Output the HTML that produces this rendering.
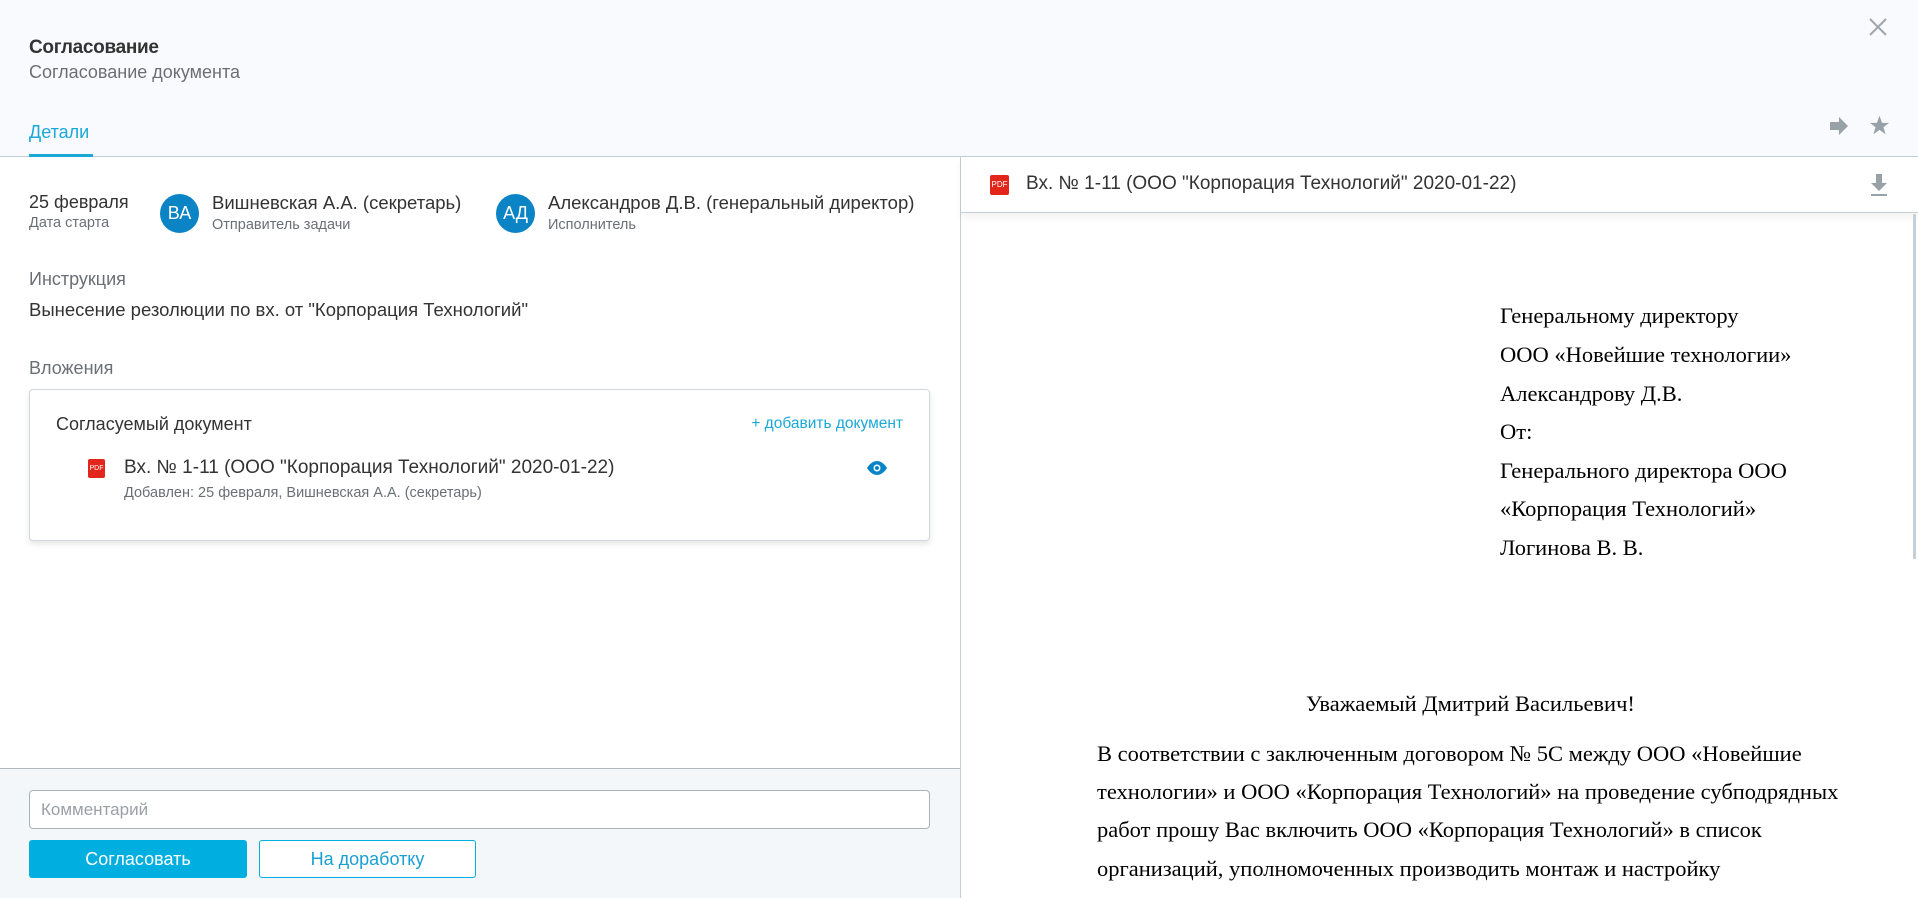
<!DOCTYPE html>
<html><head><meta charset="utf-8"><style>
*{margin:0;padding:0;box-sizing:border-box}
body{width:1918px;height:898px;position:relative;overflow:hidden;background:#fff;font-family:"Liberation Sans","DejaVu Sans",sans-serif;color:#333}
.a{position:absolute;white-space:nowrap}
.s{font-family:"Liberation Serif",serif;color:#000;font-size:22.5px}
</style></head><body>
<div class="a" style="left:0;top:0;width:1918px;height:157px;background:#f9fafd;border-bottom:1px solid #c6ced6"></div>
<div class="a" style="left:29px;top:37px;font-size:19px;font-weight:bold;color:#333;letter-spacing:-.3px">Согласование</div>
<div class="a" style="left:29px;top:62px;font-size:18px;color:#6b6f75">Согласование документа</div>
<div class="a" style="left:29px;top:122px;font-size:18px;color:#1aa8d8">Детали</div>
<div class="a" style="left:29px;top:154px;width:64px;height:3px;background:#1aa8d8"></div>
<svg class="a" style="left:1868px;top:17px" width="20" height="20" viewBox="0 0 20 20"><path d="M2 2L18 18M18 2L2 18" stroke="#a0a6ad" stroke-width="2"/></svg>
<svg class="a" style="left:1829px;top:116px" width="20" height="20" viewBox="0 0 20 20"><path d="M1 6h9V1l9 9-9 9v-5H1z" fill="#98a0a8"/></svg>
<svg class="a" style="left:1869px;top:115px" width="21" height="21" viewBox="0 0 24 24"><path d="M12 1l3 8h8l-6.5 5 2.5 8-7-5-7 5 2.5-8L1 9h8z" fill="#98a0a8"/></svg>
<div class="a" style="left:960px;top:157px;width:1px;height:741px;background:#c6ced6"></div>
<div class="a" style="left:29px;top:192px;font-size:18px">25 февраля</div>
<div class="a" style="left:29px;top:215px;font-size:14.5px;color:#6b6f75">Дата старта</div>
<div class="a" style="left:160px;top:194px;width:39px;height:39px;border-radius:50%;background:#0b84c6;color:#fff;font-size:18px;line-height:39px;text-align:center">ВА</div>
<div class="a" style="left:212px;top:192px;font-size:18.5px">Вишневская А.А. (секретарь)</div>
<div class="a" style="left:212px;top:217px;font-size:14.5px;color:#6b6f75">Отправитель задачи</div>
<div class="a" style="left:496px;top:194px;width:39px;height:39px;border-radius:50%;background:#0b84c6;color:#fff;font-size:18px;line-height:39px;text-align:center">АД</div>
<div class="a" style="left:548px;top:192px;font-size:18.5px">Александров Д.В. (генеральный директор)</div>
<div class="a" style="left:548px;top:217px;font-size:14.5px;color:#6b6f75">Исполнитель</div>
<div class="a" style="left:29px;top:269px;font-size:18px;color:#6b6f75">Инструкция</div>
<div class="a" style="left:29px;top:299px;font-size:18.5px">Вынесение резолюции по вх. от "Корпорация Технологий"</div>
<div class="a" style="left:29px;top:358px;font-size:18px;color:#6b6f75">Вложения</div>
<div class="a" style="left:29px;top:389px;width:901px;height:152px;border:1px solid #d3d8de;border-radius:4px;box-shadow:0 3px 6px rgba(0,0,0,.1);background:#fff"></div>
<div class="a" style="left:56px;top:414px;font-size:18px">Согласуемый документ</div>
<div class="a" style="left:700px;top:415px;width:203px;text-align:right;font-size:15.5px;color:#1aa8d8">+ добавить документ</div>
<div class="a" style="left:88px;top:459px;width:17px;height:19px;background:#e2261b;border-radius:2px;color:#fff;font-size:7px;line-height:19px;text-align:center">PDF</div>
<div class="a" style="left:124px;top:457px;font-size:19px">Вх. № 1-11 (ООО "Корпорация Технологий" 2020-01-22)</div>
<div class="a" style="left:124px;top:485px;font-size:14.5px;color:#6b6f75">Добавлен: 25 февраля, Вишневская А.А. (секретарь)</div>
<svg class="a" style="left:866px;top:461px" width="22" height="14" viewBox="0 0 22 14"><path d="M1 7C4 2 8 0 11 0s7 2 10 7c-3 5-7 7-10 7S4 12 1 7z" fill="#0b84c6"/><circle cx="11" cy="7" r="3.5" fill="#fff"/><circle cx="11" cy="7" r="2" fill="#0b84c6"/></svg>
<div class="a" style="left:0;top:768px;width:960px;height:130px;background:#f3f7fa;border-top:1px solid #aeb6be"></div>
<div class="a" style="left:29px;top:790px;width:901px;height:39px;border:1px solid #aab2ba;border-radius:4px;background:#fff;font-size:17px;color:#9aa0a6;padding-left:11px;line-height:37px">Комментарий</div>
<div class="a" style="left:29px;top:840px;width:218px;height:38px;background:#00afe0;border-radius:3px;color:#fff;font-size:18px;line-height:38px;text-align:center">Согласовать</div>
<div class="a" style="left:259px;top:840px;width:217px;height:38px;border:1px solid #00afe0;border-radius:3px;background:#fff;color:#1a9fd2;font-size:18px;line-height:36px;text-align:center">На доработку</div>
<div class="a" style="left:961px;top:157px;width:957px;height:56px;background:#fff;border-bottom:1px solid #c6ced6;box-shadow:0 4px 8px rgba(0,0,0,.06)"></div>
<div class="a" style="left:990px;top:175px;width:19px;height:20px;background:#e2261b;border-radius:2px;color:#fff;font-size:8px;line-height:20px;text-align:center">PDF</div>
<div class="a" style="left:1026px;top:173px;font-size:19px">Вх. № 1-11 (ООО "Корпорация Технологий" 2020-01-22)</div>
<svg class="a" style="left:1870px;top:173px" width="18" height="24" viewBox="0 0 18 24"><path d="M6 1h6v9h5l-8 8-8-8h5z" fill="#98a0a8"/><rect x="1" y="21" width="16" height="2" fill="#98a0a8"/></svg>
<div class="a" style="left:1913px;top:214px;width:3px;height:345px;background:#c6ced6"></div>
<div class="a s" style="left:1500px;top:303px">Генеральному директору</div>
<div class="a s" style="left:1500px;top:342px">ООО «Новейшие технологии»</div>
<div class="a s" style="left:1500px;top:381px">Александрову Д.В.</div>
<div class="a s" style="left:1500px;top:419px">От:</div>
<div class="a s" style="left:1500px;top:458px">Генерального директора ООО</div>
<div class="a s" style="left:1500px;top:496px">«Корпорация Технологий»</div>
<div class="a s" style="left:1500px;top:535px">Логинова В. В.</div>
<div class="a s" style="left:1306px;top:691px">Уважаемый Дмитрий Васильевич!</div>
<div class="a s" style="left:1097px;top:741px">В соответствии с заключенным договором № 5С между ООО «Новейшие</div>
<div class="a s" style="left:1097px;top:779px">технологии» и ООО «Корпорация Технологий» на проведение субподрядных</div>
<div class="a s" style="left:1097px;top:817px">работ прошу Вас включить ООО «Корпорация Технологий» в список</div>
<div class="a s" style="left:1097px;top:856px">организаций, уполномоченных производить монтаж и настройку</div>
</body></html>
